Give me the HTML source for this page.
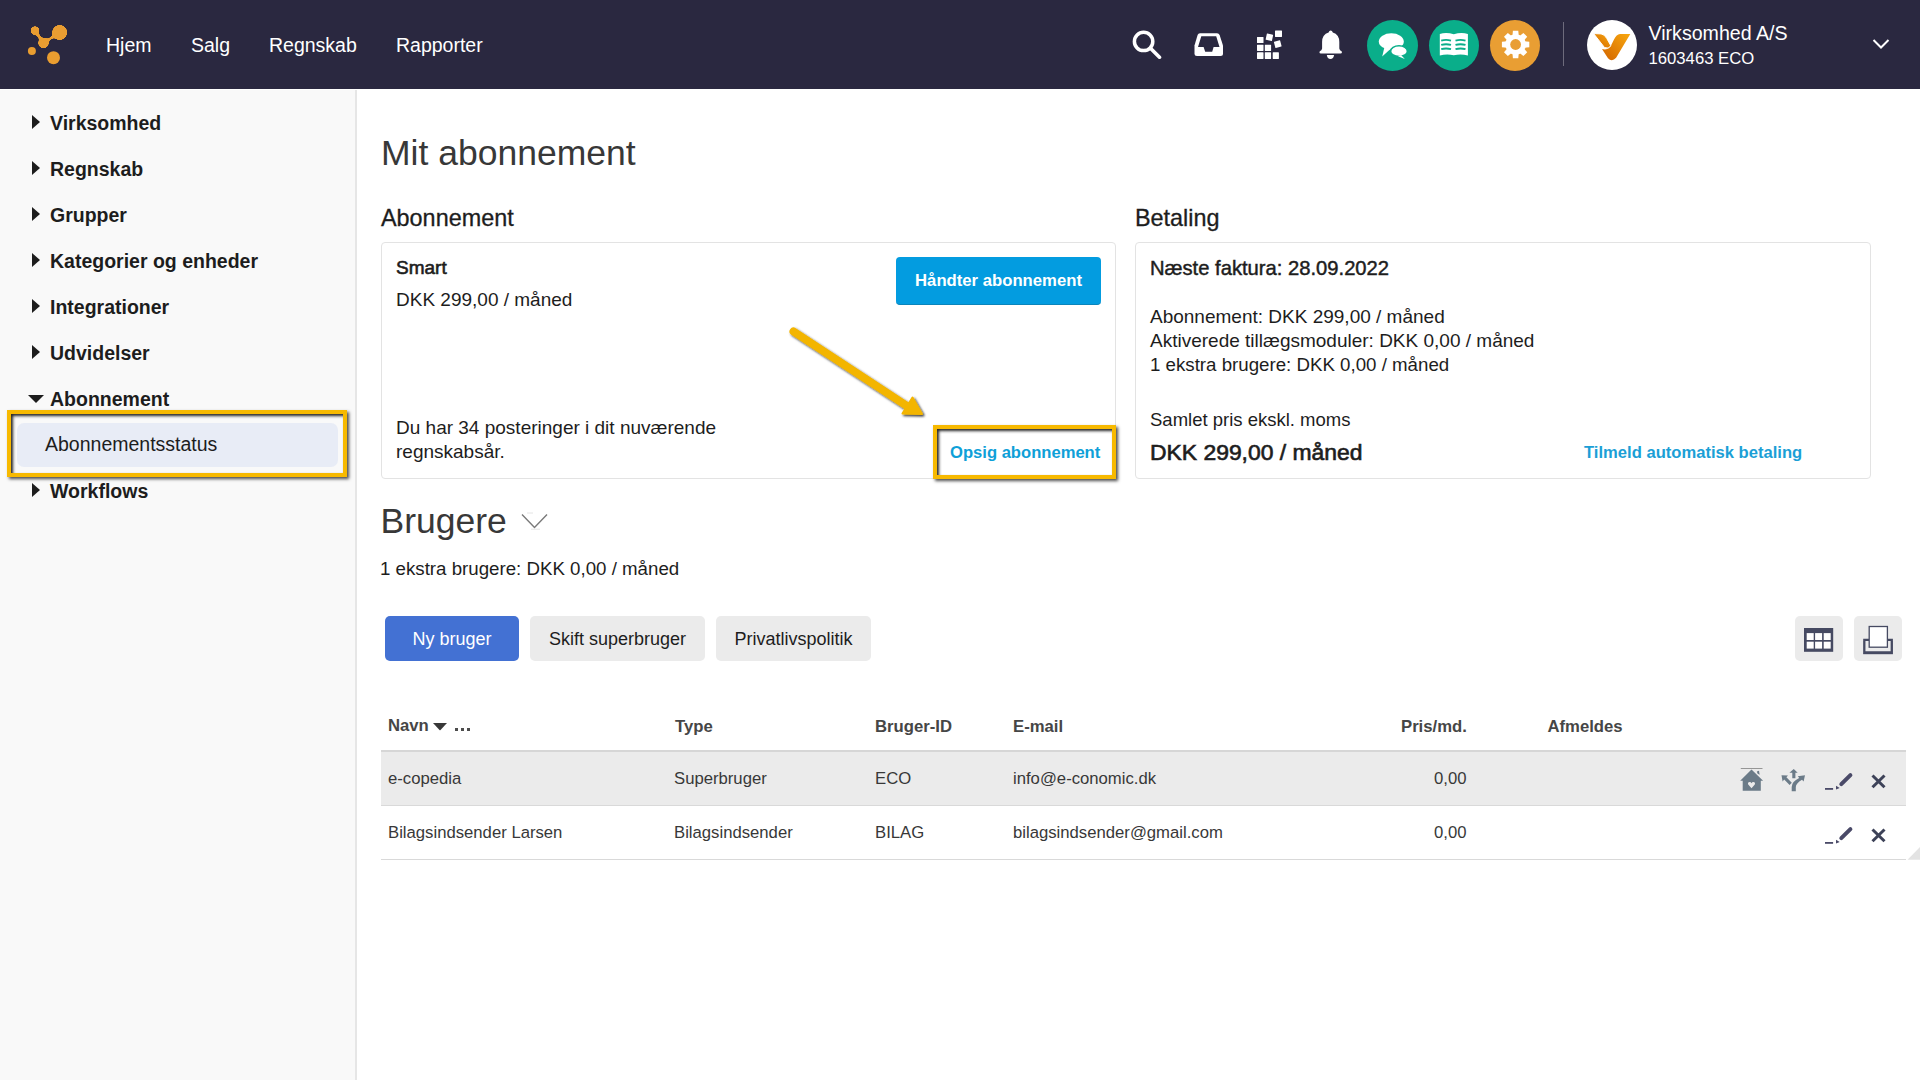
<!DOCTYPE html>
<html><head><meta charset="utf-8">
<style>
*{margin:0;padding:0;box-sizing:border-box}
html,body{width:1920px;height:1080px;overflow:hidden;background:#fff;font-family:"Liberation Sans",sans-serif;color:#1d1d1d}
.abs{position:absolute;white-space:nowrap}
#top{position:absolute;left:0;top:0;width:1920px;height:89px;background:#2a2840}
.nav{position:absolute;top:1px;height:89px;line-height:89px;font-size:19.5px;color:#fff}
#side{position:absolute;left:0;top:90px;width:357px;height:990px;background:#f9f9f9;border-right:2px solid #e6e6e6}
.si{position:absolute;left:50px;font-size:19.5px;font-weight:bold;color:#1d1d1d;line-height:24px}
.tri{position:absolute;left:32px;width:0;height:0;border-top:7.5px solid transparent;border-bottom:7.5px solid transparent;border-left:8px solid #1d1d1d}
.card{position:absolute;border:1px solid #e3e3e3;border-radius:4px;background:#fff}
.hl{position:absolute;border:4px solid #f7b900;box-shadow:2px 2px 3px rgba(0,0,0,.7), inset 2px 2px 3px rgba(0,0,0,.85)}
.btn{position:absolute;border-radius:5px;font-size:18px;text-align:center;padding-top:1px}
.th{position:absolute;top:717px;font-size:16.7px;font-weight:bold;color:#464646;line-height:20px}
.td{position:absolute;font-size:16.7px;color:#383838;line-height:20px}
</style></head><body>
<div id="top">
  <svg class="abs" style="left:20px;top:15px" width="60" height="60" viewBox="20 15 60 60">
    <defs><filter id="goo" x="-20%" y="-20%" width="140%" height="140%">
      <feGaussianBlur in="SourceGraphic" stdDeviation="1.6" result="b"/>
      <feColorMatrix in="b" type="matrix" values="1 0 0 0 0  0 1 0 0 0  0 0 1 0 0  0 0 0 12 -5"/>
    </filter></defs>
    <g fill="#e99d30" filter="url(#goo)">
      <circle cx="35" cy="30.6" r="4.4"/>
      <circle cx="59.7" cy="32.5" r="7.5"/>
      <circle cx="43.5" cy="43" r="5.3"/>
      <path d="M35 30.6 L43.5 43" stroke="#e99d30" stroke-width="2.6"/>
      <path d="M43.5 43 L59.7 32.5" stroke="#e99d30" stroke-width="2.6"/>
    </g>
    <g fill="#e99d30">
      <circle cx="31.9" cy="51" r="4"/>
      <circle cx="53.5" cy="57.7" r="6.5"/>
    </g>
  </svg>
  <div class="nav" style="left:106px">Hjem</div>
  <div class="nav" style="left:191px">Salg</div>
  <div class="nav" style="left:269px">Regnskab</div>
  <div class="nav" style="left:396px">Rapporter</div>
  <!-- icons -->
  <svg class="abs" style="left:1132px;top:30px" width="30" height="30" viewBox="0 0 30 30">
    <circle cx="11.6" cy="11.4" r="9.2" fill="none" stroke="#fff" stroke-width="3.5"/>
    <path d="M18.5 18.3 L27.5 27.2" stroke="#fff" stroke-width="3.6" stroke-linecap="round"/>
  </svg>
  <svg class="abs" style="left:1194px;top:32px" width="30" height="25" viewBox="0 0 30 25">
    <path d="M6 1.2 H23 Q25 1.2 25.6 3 L29 13.5 V21.5 Q29 24 26.5 24 H3 Q0.5 24 0.5 21.5 V13.5 L3.6 3 Q4.2 1.2 6 1.2Z" fill="#fff"/>
    <path d="M7.3 4.2 H22.2 L25.5 15.1 H19.6 L18.2 19.8 H11.2 L9.6 15.1 H4 Z" fill="#2a2840"/>
  </svg>
  <svg class="abs" style="left:1256px;top:30px" width="28" height="30" viewBox="0 0 28 30">
    <g fill="#fff">
      <rect x="1" y="6.9" width="6.5" height="6.2" rx=".4"/>
      <rect x="1" y="14.7" width="6.5" height="6.2" rx=".4"/><rect x="8.8" y="14.7" width="6.3" height="6.2" rx=".4"/>
      <rect x="1" y="22.3" width="6.5" height="6.6" rx=".4"/><rect x="8.8" y="22.3" width="6.3" height="6.6" rx=".4"/><rect x="16.7" y="22.3" width="6.2" height="6.6" rx=".4"/>
      <rect x="10.2" y="4.05" width="6.4" height="6.4" rx=".4" transform="rotate(12 13.4 7.25)"/>
      <rect x="19" y="0.6" width="7" height="6.4" rx=".4"/>
      <rect x="18.55" y="10.95" width="6.4" height="6.4" rx=".4" transform="rotate(-15 21.75 14.15)"/>
    </g>
  </svg>
  <svg class="abs" style="left:1319px;top:30px" width="24" height="30" viewBox="0 0 24 30">
    <path d="M11.7 0.5 Q13.2 0.5 13.8 2.5 Q20.3 4.5 20.3 12 V18.5 Q20.6 20.4 22.6 21.3 Q23.6 23.5 21.5 23.6 H1.9 Q-0.2 23.5 0.8 21.3 Q2.8 20.4 3.1 18.5 V12 Q3.1 4.5 9.6 2.5 Q10.2 0.5 11.7 0.5 Z" fill="#fff"/>
    <path d="M7.8 25 H15.1 Q14.5 28.9 11.45 28.9 Q8.4 28.9 7.8 25 Z" fill="#fff"/>
  </svg>
  <div class="abs" style="left:1367px;top:19.5px;width:51px;height:51px;border-radius:50%;background:#0aae8a"></div>
  <svg class="abs" style="left:1367px;top:19.5px" width="51" height="51" viewBox="0 0 51 51">
    <ellipse cx="24.3" cy="21.5" rx="12.5" ry="8.2" fill="#fff"/>
    <path d="M17.5 27 L15.2 36.5 L24 28.5Z" fill="#fff"/>
    <ellipse cx="32" cy="31.2" rx="8.4" ry="5.4" fill="#fff" stroke="#0aae8a" stroke-width="1.6"/>
    <path d="M34 35 L37.8 38.9 L31 36.2Z" fill="#fff"/>
  </svg>
  <div class="abs" style="left:1429px;top:19.5px;width:50px;height:51px;border-radius:50%;background:#0aae8a"></div>
  <svg class="abs" style="left:1429px;top:19.5px" width="50" height="51" viewBox="0 0 50 51">
    <path d="M10.8 14 Q17 11.8 24.8 14.2 Q32.6 11.8 38.9 14 V35.5 Q32 33.5 24.8 35.2 Q17.6 33.5 10.8 35.5 Z" fill="#fff"/>
    <g stroke="#0aae8a" stroke-width="1.9" fill="none">
      <path d="M12.2 20.6 Q17 19.2 22 20.6 M12.2 24.9 Q17 23.5 22 24.9 M12.2 29.2 Q17 27.8 22 29.2"/>
      <path d="M26.5 20.6 Q31.5 19.2 36.5 20.6 M26.5 24.9 Q31.5 23.5 36.5 24.9 M26.5 29.2 Q31.5 27.8 36.5 29.2"/>
    </g>
  </svg>
  <div class="abs" style="left:1490px;top:19.5px;width:50px;height:51px;border-radius:50%;background:#e99e33"></div>
  <svg class="abs" style="left:1490px;top:19.5px" width="50" height="51" viewBox="0 0 50 51">
    <g transform="translate(25.6 24.5)" fill="#fff">
      <circle r="10.3"/>
      <g id="teeth">
        <path d="M-2.7 -13.7 H2.7 L3.2 -8 H-3.2Z"/>
        <path d="M-2.7 13.7 H2.7 L3.2 8 H-3.2Z"/>
        <path d="M-13.7 -2.7 V2.7 L-8 3.2 V-3.2Z"/>
        <path d="M13.7 -2.7 V2.7 L8 3.2 V-3.2Z"/>
      </g>
      <use href="#teeth" transform="rotate(45)"/>
      <circle r="5.4" fill="#e99e33"/>
    </g>
  </svg>
  <div class="abs" style="left:1563px;top:22px;width:1px;height:44px;background:#6d6b7c"></div>
  <div class="abs" style="left:1587px;top:20px;width:50px;height:50px;border-radius:50%;background:#fff"></div>
  <svg class="abs" style="left:1587px;top:20px" width="50" height="50" viewBox="0 0 50 50">
    <defs><linearGradient id="vg" x1="1" y1="0" x2="0" y2="1"><stop offset="0" stop-color="#f8a80f"/><stop offset="1" stop-color="#d26400"/></linearGradient></defs>
    <path d="M43.3 13.9 L33 13.9 Q29.5 14.3 27 19.5 L23.8 26 Q20.5 30.5 15 29 L21 38.2 Q24.9 42.3 29.1 37.8 Z" fill="url(#vg)"/>
    <path d="M6.6 13.6 L14.1 13.9 Q17.5 14.3 19.8 18.5 L23.9 25.8 Q21.5 29.5 17.5 27.5 Z" fill="url(#vg)" stroke="#fff" stroke-width="1"/>
  </svg>
  <div class="abs" style="left:1648.5px;top:21px;font-size:19.6px;color:#fff;line-height:24px">Virksomhed A/S</div>
  <div class="abs" style="left:1648.5px;top:48.5px;font-size:16.7px;color:#fff;line-height:20px">1603463 ECO</div>
  <svg class="abs" style="left:1872px;top:38px" width="18" height="13" viewBox="0 0 18 13">
    <path d="M1.5 2 L9 9.5 L16.5 2" fill="none" stroke="#fff" stroke-width="2"/>
  </svg>
</div>
<div class="abs" style="left:0;top:89px;width:1920px;height:1px;background:#fff"></div>

<div id="side">
</div>
<div class="tri" style="top:115px"></div><div class="si" style="top:111px">Virksomhed</div>
<div class="tri" style="top:161px"></div><div class="si" style="top:157px">Regnskab</div>
<div class="tri" style="top:207px"></div><div class="si" style="top:203px">Grupper</div>
<div class="tri" style="top:253px"></div><div class="si" style="top:249px">Kategorier og enheder</div>
<div class="tri" style="top:299px"></div><div class="si" style="top:295px">Integrationer</div>
<div class="tri" style="top:345px"></div><div class="si" style="top:341px">Udvidelser</div>
<div class="abs" style="left:28px;top:395px;width:0;height:0;border-left:8px solid transparent;border-right:8px solid transparent;border-top:8.5px solid #1d1d1d"></div><div class="si" style="top:387px">Abonnement</div>
<div class="abs" style="left:17px;top:423px;width:321px;height:44px;border-radius:7px;background:#e8ecf6"></div>
<div class="abs" style="left:45px;top:432.3px;font-size:19.5px;line-height:24px;color:#1d1d1d">Abonnementsstatus</div>
<div class="hl" style="left:7px;top:410px;width:340px;height:67px"></div>
<div class="tri" style="top:483px"></div><div class="si" style="top:479px">Workflows</div>

<div id="main">
<div class="abs" style="left:381px;top:132.5px;font-size:35.5px;line-height:40px;color:#383838">Mit abonnement</div>
<div class="abs" style="left:381px;top:205px;font-size:23.4px;line-height:26px;color:#1d1d1d;-webkit-text-stroke:0.3px #1d1d1d">Abonnement</div>
<div class="abs" style="left:1135px;top:205px;font-size:23.4px;line-height:26px;color:#1d1d1d;-webkit-text-stroke:0.3px #1d1d1d">Betaling</div>
<div class="card" style="left:381px;top:242px;width:735px;height:237px"></div>
<div class="card" style="left:1135px;top:242px;width:736px;height:237px"></div>
<div class="abs" style="left:396px;top:258px;font-size:19px;line-height:20px;-webkit-text-stroke:0.6px #1d1d1d">Smart</div>
<div class="abs" style="left:396px;top:290px;font-size:19px;line-height:20px">DKK 299,00 / måned</div>
<div class="abs" style="left:896px;top:257px;width:205px;height:47.5px;background:#039ce0;border-bottom:1.5px solid #0b85bb;border-radius:4px;color:#fff;font-weight:bold;font-size:16.7px;line-height:47px;text-align:center">Håndter abonnement</div>
<div class="abs" style="left:396px;top:415.5px;font-size:19px;line-height:24px">Du har 34 posteringer i dit nuværende<br>regnskabsår.</div>
<div class="abs" style="left:950px;top:443px;font-size:16.6px;font-weight:bold;color:#0ea0d8;line-height:20px">Opsig abonnement</div>
<div class="hl" style="left:932.5px;top:425px;width:183.5px;height:54px"></div>
<svg class="abs" style="left:780px;top:320px" width="160" height="110" viewBox="780 320 160 110">
  <defs><filter id="sh" x="-20%" y="-20%" width="140%" height="140%"><feDropShadow dx="1.5" dy="1.5" stdDeviation="1" flood-color="#000" flood-opacity=".8"/></filter></defs>
  <g filter="url(#sh)">
    <path d="M793.5 331.5 L907 406" stroke="#f3b500" stroke-width="8" stroke-linecap="round"/>
    <path d="M922 414 L902.5 413.5 L912.5 397.5 Z" fill="#f3b500" stroke="#f3b500" stroke-width="2" stroke-linejoin="round"/>
  </g>
</svg>

<div class="abs" style="left:1150px;top:257.5px;font-size:20.2px;line-height:20px;-webkit-text-stroke:0.45px #1d1d1d">Næste faktura: 28.09.2022</div>
<div class="abs" style="left:1150px;top:305px;font-size:19px;line-height:24px">Abonnement: DKK 299,00 / måned<br>Aktiverede tillægsmoduler: DKK 0,00 / måned<br><span style="font-size:18.7px">1 ekstra brugere: DKK 0,00 / måned</span></div>
<div class="abs" style="left:1150px;top:410px;font-size:18.5px;line-height:20px">Samlet pris ekskl. moms</div>
<div class="abs" style="left:1150px;top:439px;font-size:22.9px;line-height:26px;-webkit-text-stroke:0.65px #1d1d1d">DKK 299,00 / måned</div>
<div class="abs" style="left:1584px;top:443px;font-size:16.6px;font-weight:bold;color:#1b9fd6;line-height:20px">Tilmeld automatisk betaling</div>

<div class="abs" style="left:380.5px;top:501.2px;font-size:35.5px;line-height:40px;color:#383838">Brugere</div>
<svg class="abs" style="left:520px;top:512px" width="30" height="20" viewBox="0 0 30 20"><path d="M2 2.5 L14.5 15.5 L27 2.5" fill="none" stroke="#7a7a7a" stroke-width="1.4"/><path d="M7 1 H13 M11 17.2 H20" stroke="#ddd" stroke-width="0.8"/></svg>
<div class="abs" style="left:380px;top:559.2px;font-size:18.7px;line-height:20px">1 ekstra brugere: DKK 0,00 / måned</div>

<div class="btn" style="left:385px;top:616px;width:134px;height:45px;background:#4371d3;color:#fff;line-height:45px">Ny bruger</div>
<div class="btn" style="left:530px;top:616px;width:175px;height:45px;background:#ebebeb;color:#1d1d1d;line-height:45px">Skift superbruger</div>
<div class="btn" style="left:716px;top:616px;width:155px;height:45px;background:#ebebeb;color:#1d1d1d;line-height:45px">Privatlivspolitik</div>
<div class="btn" style="left:1795px;top:616px;width:48px;height:45px;background:#ebebeb"></div>
<div class="btn" style="left:1854px;top:616px;width:48px;height:45px;background:#ebebeb"></div>
<svg class="abs" style="left:1804px;top:628px" width="30" height="24" viewBox="0 0 30 24">
  <rect x="0" y="0" width="29.2" height="23.8" fill="#464a62"/>
  <g fill="#fff"><rect x="2.7" y="5.1" width="7" height="6.9"/><rect x="11.1" y="5.1" width="7" height="6.9"/><rect x="19.7" y="5.1" width="7" height="6.9"/>
  <rect x="2.7" y="13.7" width="7" height="6.9"/><rect x="11.1" y="13.7" width="7" height="6.9"/><rect x="19.7" y="13.7" width="7" height="6.9"/></g>
</svg>
<svg class="abs" style="left:1862px;top:625px" width="32" height="30" viewBox="0 0 32 30">
  <path d="M2.3 15.9 V27.4 H29.8 V15.9" fill="none" stroke="#464a62" stroke-width="2.3"/>
  <path d="M1.2 28.6 H30.9" stroke="#464a62" stroke-width="1.2"/>
  <path d="M1.2 14.8 H7 M25.5 14.8 H30.9" stroke="#464a62" stroke-width="2.2"/>
  <rect x="7.2" y="1.5" width="18.2" height="20.7" fill="#fff" stroke="#464a62" stroke-width="1.3"/>
</svg>



<div class="th" style="left:388px;top:716px">Navn</div>
<svg class="abs" style="left:433px;top:722.5px" width="15" height="8" viewBox="0 0 15 8"><path d="M0 0 H14 L7.5 7 Q7 7.4 6.5 7Z" fill="#383838"/></svg>
<div class="abs" style="left:455px;top:728.4px;width:2.6px;height:2.3px;background:#4d4d4d"></div><div class="abs" style="left:461px;top:728.4px;width:2.6px;height:2.3px;background:#4d4d4d"></div><div class="abs" style="left:467px;top:728.4px;width:2.6px;height:2.3px;background:#4d4d4d"></div>
<div class="th" style="left:675px">Type</div>
<div class="th" style="left:875px">Bruger-ID</div>
<div class="th" style="left:1013px">E-mail</div>
<div class="th" style="left:1401px">Pris/md.</div>
<div class="th" style="left:1547.5px">Afmeldes</div>
<div class="abs" style="left:381px;top:750px;width:1525px;height:55.5px;background:#ebebeb;border-top:2px solid #d6d6d6;border-bottom:1px solid #d9d9d9"></div>
<div class="abs" style="left:381px;top:858.5px;width:1525px;height:1.5px;background:#d9d9d9"></div>
<div class="td" style="left:388px;top:769px">e-copedia</div>
<div class="td" style="left:674px;top:769px">Superbruger</div>
<div class="td" style="left:875px;top:769px">ECO</div>
<div class="td" style="left:1013px;top:769px">info@e-conomic.dk</div>
<div class="td" style="left:1434px;top:769px">0,00</div>
<div class="td" style="left:388px;top:823px">Bilagsindsender Larsen</div>
<div class="td" style="left:674px;top:823px">Bilagsindsender</div>
<div class="td" style="left:875px;top:823px">BILAG</div>
<div class="td" style="left:1013px;top:823px">bilagsindsender@gmail.com</div>
<div class="td" style="left:1434px;top:823px">0,00</div>
<svg class="abs" style="left:1735px;top:762px" width="80" height="35" viewBox="0 0 80 35">
  <path d="M5.8 6.5 H27.5" stroke="#8c8c8c" stroke-width="0.9"/>
  <g fill="#6b7b88">
    <path d="M16.5 7.5 L28.1 18.75 H25.8 V28.75 H7.7 V18.75 H5.2 Z"/>
    <path d="M21.8 9.5 L24 8.8 L24.6 12.8 L22.5 11.5Z"/>
    <path d="M54.4 10.8 L58.75 6.9 L62.7 10.8 H60.4 V16.3 H57.3 V10.8Z"/>
    <path d="M46.5 13.2 L53 13.6 L51.4 15.2 L56.8 20.8 L54.6 23 L49.2 17.4 L47.6 19.5Z"/>
    <path d="M56.7 29.2 V25 Q56.7 19.5 64.2 16 L62.8 14.2 L70 13.2 L68.6 19.5 L67 17.8 Q60.8 21.5 60.8 25 V29.2Z"/>
  </g>
  <g fill="#ebebeb"><path d="M16.5 26.2 L13.2 22.6 Q12.4 20.3 14.6 20 Q15.9 19.9 16.5 21.3 Q17.1 19.9 18.4 20 Q20.6 20.3 19.8 22.6Z"/></g>
</svg>
<svg class="abs" style="left:1815px;top:762px" width="80" height="35" viewBox="0 0 80 35">
  <g fill="#4a4a68"><rect x="10" y="26" width="8.1" height="1.8"/>
  <path d="M21 23.7 L24.7 25.9 L21 27.6Z"/></g>
  <path d="M26.3 22.2 L35.4 13.1" stroke="#4a4a68" stroke-width="4" stroke-linecap="round"/>
  <path d="M57.5 13.5 L69.5 25.3 M69.5 13.5 L57.5 25.3" stroke="#3d4258" stroke-width="3"/>
</svg>
<svg class="abs" style="left:1815px;top:816px" width="80" height="35" viewBox="0 0 80 35">
  <g fill="#4a4a68"><rect x="10" y="26" width="8.1" height="1.8"/>
  <path d="M21 23.7 L24.7 25.9 L21 27.6Z"/></g>
  <path d="M26.3 22.2 L35.4 13.1" stroke="#4a4a68" stroke-width="4" stroke-linecap="round"/>
  <path d="M57.5 13.5 L69.5 25.3 M69.5 13.5 L57.5 25.3" stroke="#3d4258" stroke-width="3"/>
</svg>
<svg class="abs" style="left:1900px;top:840px" width="20" height="20" viewBox="0 0 20 20"><path d="M7.5 19.8 L20 6.9 V19.8Z" fill="#e3e3e3"/></svg>
</div>
</body></html>
